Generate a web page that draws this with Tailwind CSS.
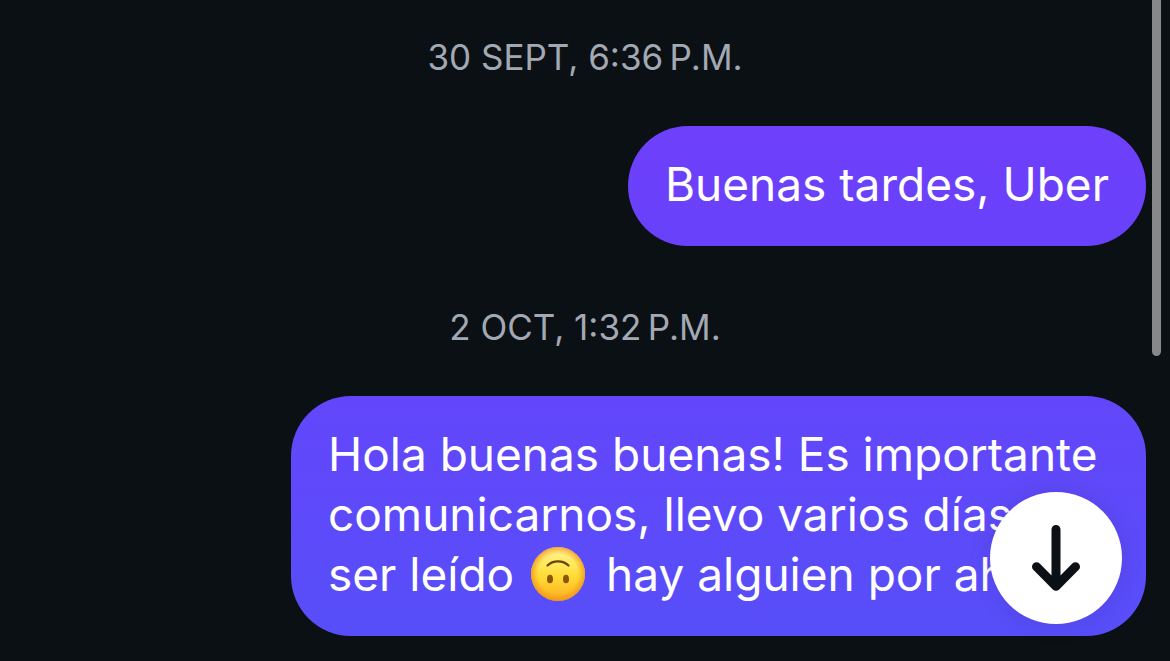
<!DOCTYPE html>
<html lang="es">

<head>
    <meta charset="utf-8">
    <meta name="viewport" content="width=device-width, initial-scale=1">
    <title>Chat</title>
    <script src="https://cdn.jsdelivr.net/npm/@tailwindcss/browser@4"></script>
</head>

<body class="relative min-h-screen overflow-hidden bg-[#0b1014] font-['Inter',sans-serif]">
    <!-- Mensajes -->
    <main class="flex flex-col items-end px-6">
        <time class="mt-[35px] mb-[47px] self-center text-[35px] leading-11 text-[#a2a9b4]">30 SEPT, 6:36&#8239;P.M.</time>
        <p class="rounded-[60px] bg-linear-to-b from-[#6e40fb] to-[#6941fb] px-[37px] pt-7 pb-8 text-[46px] leading-[60px] text-white">Buenas tardes, Uber</p>

        <time class="mt-[59px] mb-[47px] self-center text-[35px] leading-11 text-[#a2a9b4]">2 OCT, 1:32&#8239;P.M.</time>
        <p class="w-full max-w-[855px] rounded-[60px] bg-linear-to-b from-[#6346fb] to-[#574ef9] pt-7 pr-6 pb-8 pl-[37px] text-[46px] leading-[60px] text-white">
            Hola buenas buenas! Es importante<br>
            comunicarnos, llevo varios días sin<br>
            ser leído
            <svg role="img" aria-label="🙃" class="mr-2 ml-1 inline size-[54px] align-[-10px]" viewBox="0 0 54 54" fill="none">
                <defs>
                    <linearGradient id="cara" x1="0" y1="0" x2="0" y2="1">
                        <stop offset="0" stop-color="#fff5a0" />
                        <stop offset=".25" stop-color="#ffec66" />
                        <stop offset=".55" stop-color="#ffdc35" />
                        <stop offset="1" stop-color="#fdab22" />
                    </linearGradient>
                    <radialGradient id="borde" cx=".5" cy=".5" r=".5">
                        <stop offset=".72" stop-color="#f59a14" stop-opacity="0" />
                        <stop offset="1" stop-color="#ee8f14" stop-opacity=".75" />
                    </radialGradient>
                </defs>
                <circle cx="27" cy="27" r="27" fill="url(#cara)" />
                <circle cx="27" cy="27" r="27" fill="url(#borde)" />
                <path d="M16.500 18.500C22 13 32 13 37.500 18.500" stroke="#6b4208" stroke-width="2.200" stroke-linecap="round" />
                <ellipse cx="19" cy="32" rx="3" ry="4.300" fill="#8a5409" />
                <ellipse cx="35" cy="32" rx="3" ry="4.300" fill="#8a5409" />
            </svg>
            hay alguien por ahí?
        </p>
    </main>

    <!-- Barra de desplazamiento -->
    <div class="absolute top-0 right-[9px] h-[356px] w-[9px] rounded-b-full bg-[#868889]"></div>

    <!-- Ir al final -->
    <button type="button" aria-label="Ir al final"
        class="absolute right-12 bottom-[37px] flex size-[132px] items-center justify-center rounded-full bg-white shadow-[0_0_24px] shadow-black/10">
        <svg class="h-[68px] w-[52px]" viewBox="0 0 52 68" fill="none" stroke="#0b1014" stroke-width="9" stroke-linecap="round" stroke-linejoin="round">
            <path d="M26 5.500V62M6.500 42.700L26 62.300L45.500 42.700" />
        </svg>
    </button>
</body>

</html>
